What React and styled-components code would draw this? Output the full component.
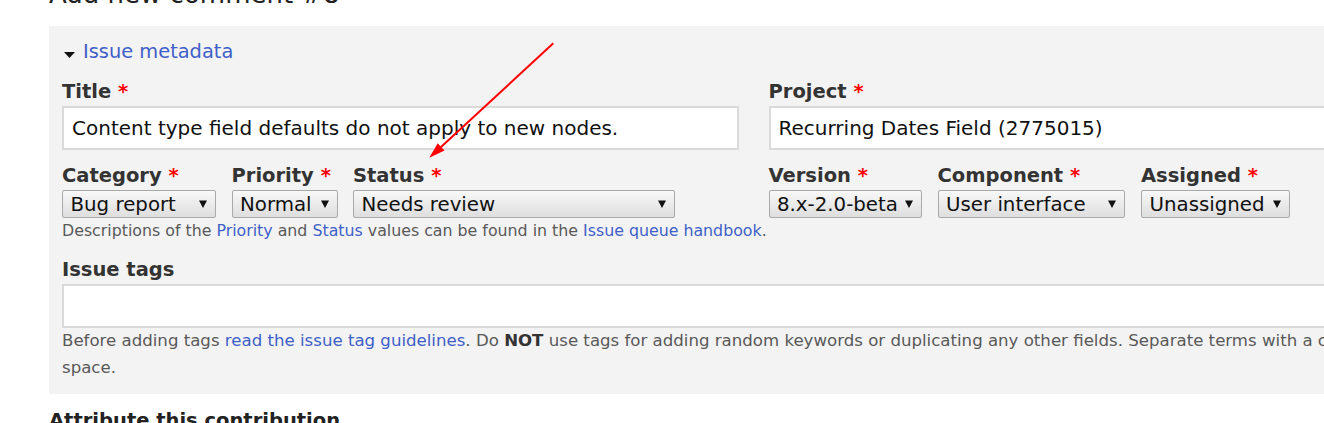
import React from "react";
import styled, { createGlobalStyle } from "styled-components";

const GlobalStyle = createGlobalStyle`
  html, body { margin: 0; padding: 0; overflow: hidden; background: #fff; }
  body { font-family: "DejaVu Sans", "Liberation Sans", sans-serif; color: #333; }
  * { box-sizing: border-box; }
`;

const Page = styled.div`
  padding-left: 49px;
  width: max-content;
`;

const Heading = styled.h2`
  margin: -21px 0 15.8px;
  font-size: 26px;
  font-weight: normal;
  line-height: 31.2px;
  color: #222;
`;

const SubHeading = styled.h3`
  margin: 15px 0 0;
  font-size: 19.5px;
  font-weight: bold;
  line-height: 23.4px;
  color: #222;
`;

const Panel = styled.section`
  background: #f3f3f3;
  padding: 13px 13px 13px;
  width: 1409.5px;
`;

const Legend = styled.a`
  display: flex;
  align-items: center;
  font-size: 19.4px;
  line-height: 26px;
  color: #4060c8;
  text-decoration: none;
  margin-bottom: 14.5px;
`;

const Caret = styled.svg`
  margin: 5px 8px 0 2px;
  flex: none;
`;

const Columns = styled.div`
  display: grid;
  grid-template-columns: 677px 677px;
  column-gap: 29.5px;
  row-gap: 14px;
`;

const Field = styled.div`
  display: flex;
  flex-direction: column;
  align-items: flex-start;
`;

const Label = styled.label`
  display: block;
  font-size: 19.5px;
  font-weight: bold;
  line-height: 24px;
  color: #333;
  margin-bottom: 2px;
  white-space: nowrap;
`;

const Req = styled.span`
  color: #f00;
`;

const TextInput = styled.input`
  display: block;
  width: ${(p) => p.$width};
  height: 44px;
  border: 2px solid #dadada;
  background: #fff;
  padding: 0 8px;
  font-family: "DejaVu Sans", sans-serif;
  font-size: 20px;
  color: #111;
  outline: none;
  margin: 0;
`;

const SelectRow = styled.div`
  display: flex;
  gap: ${(p) => p.$gap}px;
`;

const SelectBox = styled.div`
  width: ${(p) => p.$width}px;
  height: 28px;
  border: 1px solid #a9a9a9;
  border-radius: 2px;
  background: linear-gradient(#f8f8f8, #dedede);
  display: flex;
  align-items: center;
  justify-content: space-between;
  padding: 1px 8px 0 7.5px;
  font-size: 19.8px;
  color: #111;
  white-space: nowrap;
`;

const Description = styled.div`
  font-size: 15.8px;
  line-height: 26.6px;
  color: #595959;
  white-space: nowrap;
`;

const Help = styled.div`
  font-size: 16.6px;
  line-height: 26.6px;
  color: #595959;
  width: 1383.5px;
`;

const Link = styled.a`
  color: #4060c8;
  text-decoration: none;
`;

const Strong = styled.strong`
  color: #333;
`;

const TagsField = styled(Field)`
  margin-top: 14px;
`;

const Annotation = styled.svg`
  position: absolute;
  left: 0;
  top: 0;
  pointer-events: none;
`;

const Arrow = () => (
  <svg width="8" height="8" viewBox="0 0 8 8">
    <polygon points="0,0.5 8,0.5 4,8" fill="#111" />
  </svg>
);

const Select = ({ label, value, width }) => (
  <Field>
    <Label>
      {label} <Req>*</Req>
    </Label>
    <SelectBox $width={width}>
      <span>{value}</span>
      <Arrow />
    </SelectBox>
  </Field>
);

export default function App() {
  return (
    <>
      <GlobalStyle />
      <Page>
        <Heading>Add new comment #8</Heading>
        <Panel>
          <Legend href="#">
            <Caret width="11" height="6" viewBox="0 0 11 6">
              <polygon points="0,0 11,0 5.5,6" fill="#111" />
            </Caret>
            Issue metadata
          </Legend>
          <Columns>
            <Field>
              <Label>
                Title <Req>*</Req>
              </Label>
              <TextInput
                $width="677px"
                readOnly
                value="Content type field defaults do not apply to new nodes."
              />
            </Field>
            <Field>
              <Label>
                Project <Req>*</Req>
              </Label>
              <TextInput $width="677px" readOnly value="Recurring Dates Field (2775015)" />
            </Field>
            <SelectRow $gap={15.5}>
              <Select label="Category" value="Bug report" width={154} />
              <Select label="Priority" value="Normal" width={106} />
              <Select label="Status" value="Needs review" width={322} />
            </SelectRow>
            <SelectRow $gap={16}>
              <Select label="Version" value="8.x-2.0-beta" width={153} />
              <Select label="Component" value="User interface" width={187.5} />
              <Select label="Assigned" value="Unassigned" width={149} />
            </SelectRow>
          </Columns>
          <Description>
            Descriptions of the <Link href="#">Priority</Link> and <Link href="#">Status</Link> values
            can be found in the <Link href="#">Issue queue handbook</Link>.
          </Description>
          <TagsField>
            <Label>Issue tags</Label>
            <TextInput $width="1383.5px" readOnly value="" />
          </TagsField>
          <Help>
            Before adding tags <Link href="#">read the issue tag guidelines</Link>. Do <Strong>NOT</Strong> use
            tags for adding random keywords or duplicating any other fields. Separate terms with a comma, not a
            space.
          </Help>
        </Panel>
        <SubHeading>Attribute this contribution</SubHeading>
      </Page>
      <Annotation width="1324" height="423" viewBox="0 0 1324 423">
        <line x1="553.3" y1="43.3" x2="441" y2="147" stroke="#f00" strokeWidth="2" />
        <polygon points="429.3,157.7 444.5,150.6 437.7,143.2" fill="#f00" />
      </Annotation>
    </>
  );
}
